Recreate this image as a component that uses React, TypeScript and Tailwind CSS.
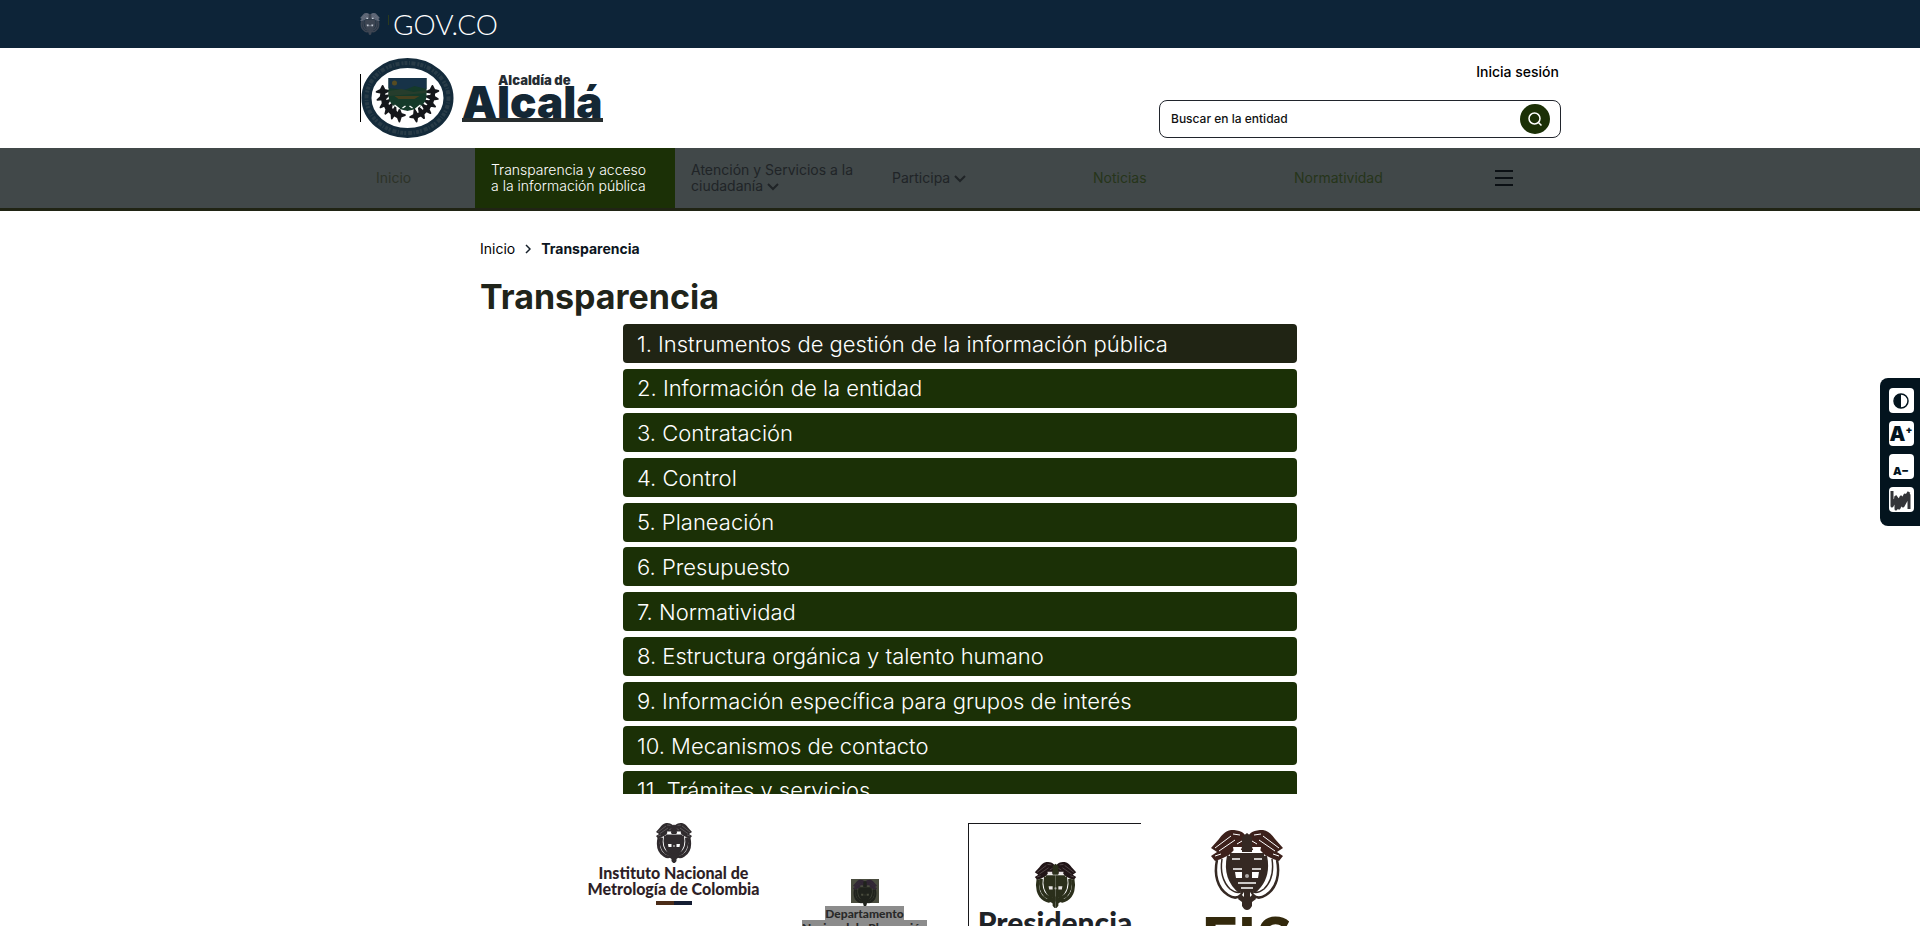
import React from "react";

const items = [
  "1. Instrumentos de gestión de la información pública",
  "2. Información de la entidad",
  "3. Contratación",
  "4. Control",
  "5. Planeación",
  "6. Presupuesto",
  "7. Normatividad",
  "8. Estructura orgánica y talento humano",
  "9. Información específica para grupos de interés",
  "10. Mecanismos de contacto",
  "11. Trámites y servicios",
];

type CrestProps = { className: string; color: string; wing: string; gap: string; filled?: boolean };

function CrestHalf({ color, wing, gap, filled }: Omit<CrestProps, "className">) {
  return (
    <>
      <path d="M36 8C33 2 29 0 20 0c-6 1-9 5-12 9L0 18l6 4-6 4 4 5 6-2 8-4 6-6 12 2z" fill={wing} />
      <path d="M4 18 20 6M8 21l16-11M22 4l7 1M26 14l5-3M4 26l6-2" stroke={gap} strokeWidth={filled ? 0.4 : 1} />
      <path d="M22 17h9l-2 5h-6z" fill={gap} />
      <path d="M6 30c-3 14 0 28 11 35 6 4 10 3 13 0" stroke={color} strokeWidth={filled ? 6 : 2.5} />
      <path d="M11 29c-2 13 1 23 8 30 5 4 8 4 11 3" stroke={color} strokeWidth={filled ? 6 : 1.5} />
      <path d="M19 26c-3 14 0 26 11 35" stroke={color} strokeWidth="6" />
      <path d="M19 23h17v46l-5-6C23 56 19 46 19 34z" fill={color} />
      <path d="M24 42h7v6h-6z" fill={gap} />
      {!filled && <path d="M21 29h8M22 39h9M27 53h9M30 58h6" stroke={gap} strokeWidth="1.5" />}
      <path d="M30 62l-3 7 4 3v4c2 3 3 4 5 4V60z" fill={color} />
      {!filled && <path d="m31 65 2-3v5z" fill={gap} />}
    </>
  );
}

function Crest({ className, ...rest }: CrestProps) {
  return (
    <svg viewBox="0 0 72 80" className={className} fill="none" aria-hidden="true">
      <CrestHalf {...rest} />
      <g transform="translate(72 0) scale(-1 1)">
        <CrestHalf {...rest} />
      </g>
      <path d="M36 3l5 4v15H31V7z" fill={rest.color} />
      <circle cx="36" cy="46" r="2" fill={rest.gap} opacity="0.6" />
    </svg>
  );
}

function Laurel() {
  const leaves = [0, 1, 2, 3, 4, 5];
  const leaf = "M0-5 2-1 6 0 2 2 1 6-1 2-6 1-2-1z";
  return (
    <g fill="#15171b" stroke="#15171b" strokeWidth="1.8" strokeLinejoin="round">
      {leaves.map((i) => {
        const a = ((-5 + i * 15) * Math.PI) / 180;
        const x = Math.cos(a) * 25;
        const y = 35 + Math.sin(a) * 24;
        return (
          <g key={i}>
            <path d={leaf} transform={`translate(${46 + x} ${y}) rotate(${i * 17})`} />
            <path d={leaf} transform={`translate(${46 - x} ${y}) rotate(${-i * 17})`} />
          </g>
        );
      })}
    </g>
  );
}

function Seal() {
  return (
    <svg viewBox="0 0 92 80" className="h-20 w-[93px]" aria-hidden="true">
      <ellipse cx="46" cy="40" rx="41" ry="35" fill="none" stroke="#142b3b" strokeWidth="10" />
      <ellipse cx="46" cy="40" rx="41" ry="35" fill="none" stroke="#31434d" strokeWidth="4" strokeDasharray="3 1.5 1 1.5 4 2 2 1" opacity="0.7" />
      <Laurel />
      <path d="M27 20h38v17c0 11-10 14-19 16-9-2-19-5-19-16z" fill="#153a2a" />
      <path d="M27 20h38v11l-12-3-10 4-16-2z" fill="#173348" />
      <path d="M27 33l13-2 12 3 13-2v3l-38 3z" fill="#263d2c" />
      <circle cx="33" cy="25" r="2.5" fill="#574c22" />
      <path d="M33 38h25l-5 3H37z" fill="#45401f" />
      <path d="M33 47l5 4M59 47l-5 4M41 50l3-2M51 50l-3-2" stroke="#fff" strokeWidth="1.5" />
    </svg>
  );
}

function Chevron() {
  return (
    <svg viewBox="0 0 12 8" className="inline-block h-2 w-3" fill="none" stroke="currentColor" strokeWidth="2" aria-hidden="true">
      <path d="m1 1 5 5 5-5" />
    </svg>
  );
}

export default function App() {
  return (
    <div className="flex h-screen flex-col overflow-hidden bg-white font-['Inter',sans-serif] text-black">
      <div className="h-12 shrink-0 bg-[#0d2438]">
        <div className="mx-auto flex h-full max-w-[1200px] items-center">
          <Crest className="h-[22px] w-5" color="#3d4552" wing="#596272" gap="#c3c9d4" filled />
          <span className="mb-2 ml-2 h-2.5 w-px bg-[#2b3a1d]" />
          <a href="#gov" className="ml-1 font-['Lato',sans-serif] text-[28px] font-light text-white">GOV.CO</a>
        </div>
      </div>

      <header className="h-[100px] shrink-0">
        <div className="mx-auto flex h-full max-w-[1202px] justify-between pl-px">
          <a href="#home" className="flex items-center text-[#142735]">
            <span className="h-12 w-px bg-black" />
            <Seal />
            <span className="ml-2 flex flex-col font-black">
              <span className="pl-9 text-[13px] leading-3 text-[#262d33]">Alcaldía de</span>
              <span className="border-b-4 border-[#262d2f] text-[44px] leading-8">Alcalá</span>
            </span>
          </a>
          <div className="flex w-[402px] flex-col items-end pt-3.5">
            <a href="#login" className="mr-0.5 text-sm leading-5 font-medium">Inicia sesión</a>
            <form className="mt-[18px] flex h-[38px] w-full items-center rounded-lg border border-[#20242c] pr-2.5 pl-[11px]">
              <input aria-label="Buscar en la entidad" placeholder="Buscar en la entidad" className="min-w-0 flex-1 text-xs font-medium outline-none placeholder:text-[#111]" />
              <button type="button" aria-label="Buscar" className="flex size-[30px] items-center justify-center rounded-full bg-[#1b3006] text-white">
                <svg viewBox="0 0 16 16" className="size-4" fill="none" stroke="currentColor" strokeWidth="1.5"><circle cx="7.5" cy="7.5" r="5.5" /><path d="m11.5 11.5 3 3" /></svg>
              </button>
            </form>
          </div>
        </div>
      </header>

      <nav className="h-[63px] shrink-0 border-b-3 border-[#202414] bg-[#414849] text-sm leading-4 text-[#202427]">
        <div className="mx-auto flex h-full max-w-[1200px] items-center">
          <a href="#inicio" className="w-[115px] pl-4 text-[#2d3328]">Inicio</a>
          <a href="#transparencia" className="flex h-full w-[200px] items-center bg-[#1b3006] pl-4 font-light text-white">Transparencia y acceso<br />a la información pública</a>
          <a href="#atencion" className="w-[201px] pl-4">Atención y Servicios a la<br />ciudadanía <Chevron /></a>
          <a href="#participa" className="w-[201px] pl-4">Participa <Chevron /></a>
          <a href="#noticias" className="w-[201px] pl-4 text-[#26351a]">Noticias</a>
          <a href="#normatividad" className="w-[201px] pl-4 text-[#26351a]">Normatividad</a>
          <button aria-label="Menú" className="ml-4 text-[#0b1014]">
            <svg viewBox="0 0 18 16" className="h-4 w-[18px]" stroke="currentColor" strokeWidth="2"><path d="M0 1h18M0 8h18M0 15h18" /></svg>
          </button>
        </div>
      </nav>

      <main className="mx-auto w-full max-w-[960px] shrink-0 pt-7">
        <div className="flex items-center text-sm leading-5">
          <a href="#inicio">Inicio</a>
          <svg viewBox="0 0 6 10" className="mx-2.5 h-2.5 w-1.5" fill="none" stroke="#16202a" strokeWidth="1.5" aria-hidden="true"><path d="m1 1 4 4-4 4" /></svg>
          <span className="font-bold text-[#0b1420]">Transparencia</span>
        </div>
        <h1 className="mt-4 text-[34px] leading-[44px] font-bold text-[#20241a]">Transparencia</h1>
        <div className="mx-auto mt-[5px] h-[470px] max-w-[674px] overflow-hidden">
          <ul className="flex h-[486px] flex-col justify-between">
            {items.map((t, i) => (
              <li key={t}>
                <a href={"#item-" + (i + 1)} className={"flex h-[39px] items-center rounded-sm pt-px pl-3.5 text-[22px] font-light text-white " + (i === 0 ? "bg-[#202414]" : "bg-[#1b3006]")}>{t}</a>
              </li>
            ))}
          </ul>
        </div>
      </main>

      <footer className="mx-auto mt-[29px] grid w-full max-w-[764px] grid-cols-4 font-['Lato',sans-serif]">
        <div className="flex flex-col items-center">
          <Crest className="h-10 w-9" color="#302b2e" wing="#302b2e" gap="#ffffff" filled />
          <p className="mt-0.5 text-center text-base leading-4 font-black whitespace-nowrap text-[#2e1f27]">Instituto Nacional de<br />Metrología de Colombia</p>
          <div className="mt-1 flex h-1 w-9"><span className="flex-1 bg-[#4b2c18]" /><span className="flex-1 bg-[#141d32]" /></div>
        </div>
        <div className="flex flex-col items-center pt-14">
          <div className="flex h-6 w-7 justify-center bg-[#4a4d3f]"><Crest className="h-7 w-6" color="#20231d" wing="#302534" gap="#4a4d3f" filled /></div>
          <p className="mt-1 text-center text-xs leading-[14px] font-black whitespace-nowrap text-[#292929]"><span className="bg-[#8c8c8c]">Departamento</span><br /><span className="bg-[#8c8c8c]">Nacional de Planeación</span></p>
        </div>
        <div className="mr-2.5 ml-2 h-[120px] border-t border-l border-[#18181b]">
          <div className="flex flex-col items-center pt-[38px]">
            <Crest className="h-[46px] w-[43px]" color="#2b2f1b" wing="#211517" gap="#e8e4e4" filled />
            <p className="text-[30px] leading-7 font-black text-[#202327]">Presidencia</p>
          </div>
        </div>
        <div className="flex flex-col items-center pt-[7px]">
          <Crest className="h-20 w-[72px]" color="#352923" wing="#3d211b" gap="#ffffff" />
          <p className="text-[64px] leading-[60px] font-black text-[#33290c]">FIS</p>
        </div>
      </footer>

      <aside className="fixed top-[378px] right-0 flex w-10 flex-col items-center gap-2 rounded-l-lg bg-[#03141e] pt-2.5 pb-3.5 pl-0.5">
        <button aria-label="Contraste" className="flex size-[25px] items-center justify-center rounded bg-white">
          <svg viewBox="0 0 16 16" className="size-4"><circle cx="8" cy="8" r="7" fill="none" stroke="#03141e" strokeWidth="1.5" /><path d="M8 1a7 7 0 0 0 0 14z" fill="#03141e" /></svg>
        </button>
        <button aria-label="Aumentar letra" className="flex size-[25px] items-center justify-center rounded bg-white text-xl leading-6 font-black text-[#03141e]">A<sup className="text-[10px] leading-3">+</sup></button>
        <button aria-label="Reducir letra" className="flex size-[25px] items-end justify-center rounded bg-white pb-0.5 text-[11px] leading-3 font-black text-[#03141e]">A−</button>
        <button aria-label="Lengua de señas" className="flex size-[25px] items-center justify-center rounded bg-white">
          <svg viewBox="0 0 24 24" className="size-6" fill="none" stroke="#333438" strokeWidth="3" strokeLinejoin="round"><path d="M3 3v15l4-8v11l5-12-2 11 6-13-2 11 6-11v14M6 8l6 8 8-12" /></svg>
        </button>
      </aside>
    </div>
  );
}
